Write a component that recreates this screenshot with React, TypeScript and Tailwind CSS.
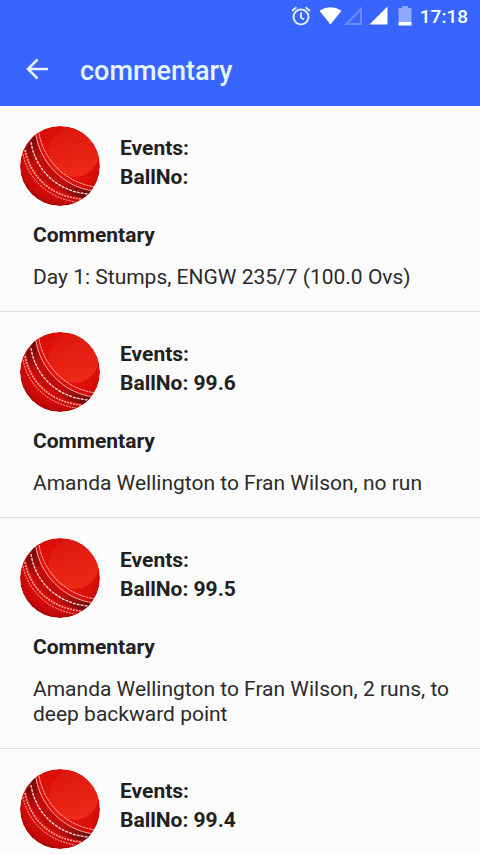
type Delivery = { ball: string; text: string };

const deliveries: Delivery[] = [
  { ball: "", text: "Day 1: Stumps, ENGW 235/7 (100.0 Ovs)" },
  { ball: "99.6", text: "Amanda Wellington to Fran Wilson, no run" },
  { ball: "99.5", text: "Amanda Wellington to Fran Wilson, 2 runs, to deep backward point" },
];

const latest: Delivery = { ball: "99.4", text: "" };

function StatusBar() {
  return (
    <div className="flex h-8 items-center justify-end pr-3 text-white">
      <svg width="20" height="20" viewBox="0 0 20 20" fill="none" stroke="#dbeaff" strokeWidth="2" aria-hidden="true">
        <circle cx="10" cy="11" r="7.5" />
        <path d="M10 6.5V11.5L13 13.5M1 5L5.500 1.200M19 5L14.500 1.200" />
      </svg>
      <svg className="ml-2" width="23" height="20" viewBox="0 0 24 20" fill="#fff" aria-hidden="true">
        <path d="M12 19L.5 4.500Q12 -2.500 23.500 4.500Z" />
      </svg>
      <svg className="ml-0.5" width="19" height="20" viewBox="0 0 19 20" fill="none" stroke="#6a8dff" strokeWidth="2" aria-hidden="true">
        <path d="M17 3V18H2.500Z" />
      </svg>
      <svg className="ml-1.5" width="19" height="20" viewBox="0 0 20 20" fill="#fff" aria-hidden="true">
        <path d="M19.500 0V19H.5Z" />
      </svg>
      <svg className="ml-2.5" width="14" height="20" viewBox="0 0 14 20" aria-hidden="true">
        <path d="M4 0H10V2H13.500V16H.5V2H4Z" fill="#8ea9ff" />
        <path d="M.5 16H13.500V19.500H.5Z" fill="#fff" />
      </svg>
      <span className="ml-2 pt-0.5 text-[19px] leading-6 font-medium">17:18</span>
    </div>
  );
}

function CricketBall() {
  return (
    <svg className="size-20 shrink-0" viewBox="0 0 80 80" fill="none" aria-hidden="true">
      <defs>
        <radialGradient id="leather" cx="0.54" cy="0.42" r="0.62">
          <stop offset="0" stopColor="#e8150b" />
          <stop offset="0.65" stopColor="#dc0e09" />
          <stop offset="0.85" stopColor="#c60a08" />
          <stop offset="1" stopColor="#960706" />
        </radialGradient>
        <linearGradient id="shine" x1="0.3" y1="0" x2="0.6" y2="1">
          <stop offset="0" stopColor="#dc160d" />
          <stop offset="0.5" stopColor="#e82013" />
          <stop offset="1" stopColor="#ee2a18" />
        </linearGradient>
        <linearGradient id="seam" x1="0" y1="0.1" x2="1" y2="0.9">
          <stop offset="0" stopColor="#5a0c0b" />
          <stop offset="0.25" stopColor="#c40d0a" />
          <stop offset="0.65" stopColor="#c00d0b" />
          <stop offset="1" stopColor="#5a0d0c" />
        </linearGradient>
        <clipPath id="sphere">
          <circle cx="40" cy="40" r="40" />
        </clipPath>
      </defs>
      <g clipPath="url(#sphere)">
        <circle cx="40" cy="40" r="40" fill="url(#leather)" />
        <ellipse cx="54" cy="26" rx="25" ry="25" fill="url(#shine)" />
        <path d="M15 8C19 34 42 61 76 65L64 72C32 67 11 48 6 22Z" fill="url(#seam)" />
        <g stroke="#f5aaa0" strokeWidth="1">
          <path d="M16 9C20 35 42 61 74 65" />
          <path d="M19 7C23 32 44 57 76 61" strokeDasharray="3 .5" />
          <path d="M11 16C15 42 35 65 68 68" stroke="#ffdcd6" strokeWidth="1.300" strokeDasharray="3 1" />
          <path d="M5 24C10 50 30 70 61 73" strokeWidth="1.600" strokeDasharray="2 1" />
          <path d="M3 28C8 53 28 72 56 76" strokeDasharray="2 1" />
        </g>
      </g>
    </svg>
  );
}

function DeliveryHead({ ball }: { ball: string }) {
  return (
    <div className="flex gap-5">
      <CricketBall />
      <div className="pt-2 text-[21px] leading-[29px] font-bold">
        <p>Events:</p>
        <p>BallNo: {ball}</p>
      </div>
    </div>
  );
}

function DeliveryItem({ ball, text }: Delivery) {
  return (
    <li className="border-b border-[#dcdcdc] px-5 pt-5 pb-[21px]">
      <DeliveryHead ball={ball} />
      <div className="mt-[17px] pl-[13px] text-[21px] leading-[25px]">
        <h2 className="font-bold">Commentary</h2>
        <p className="mt-[17px] text-[#2b2b2b]">{text}</p>
      </div>
    </li>
  );
}

export default function App() {
  return (
    <div className="h-screen overflow-hidden bg-[#fbfbfb] font-['Roboto',sans-serif] text-[#212121]">
      <header className="bg-[#3864ff] text-[#e6f4ff]">
        <StatusBar />
        <div className="flex h-[74px] items-center gap-8 px-6 pt-1">
          <button type="button" aria-label="Back" className="-mt-1">
            <svg width="24" height="24" viewBox="0 0 24 24" fill="none" stroke="currentColor" strokeWidth="2.500" aria-hidden="true">
              <path d="M24 12H4M13.500 2.500L4 12L13.500 21.500" />
            </svg>
          </button>
          <h1 className="text-[27px] leading-8 font-medium">commentary</h1>
        </div>
      </header>
      <main>
        <ul>
          {deliveries.map((d) => (
            <DeliveryItem key={d.ball} {...d} />
          ))}
          <li className="px-5 pt-5">
            <DeliveryHead ball={latest.ball} />
          </li>
        </ul>
      </main>
    </div>
  );
}
